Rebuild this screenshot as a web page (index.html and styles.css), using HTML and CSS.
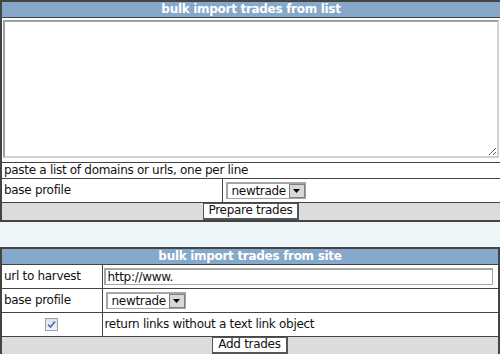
FILE: index.html
```html
<!DOCTYPE html>
<html lang="en">
<head>
    <meta charset="UTF-8">
    <title>Bulk import trades</title>
    <link rel="stylesheet" href="styles.css">
</head>
<body>
    <table class="panel">
        <tr><th colspan="2">bulk import trades from list</th></tr>
        <tr><td colspan="2" class="area-cell"><textarea class="list"></textarea></td></tr>
        <tr><td colspan="2" class="note">paste a list of domains or urls, one per line</td></tr>
        <tr>
            <td class="label wide">base profile</td>
            <td class="field">
                <span class="select">
                    <select><option>newtrade</option></select>
                    <span class="arrow"><svg width="7" height="4" viewBox="0 0 7 4"><path d="M0 0h7L3.5 4z" fill="#000"/></svg></span>
                </span>
            </td>
        </tr>
        <tr><td colspan="2" class="actions"><button>Prepare trades</button></td></tr>
    </table>

    <table class="panel second">
        <tr><th colspan="2">bulk import trades from site</th></tr>
        <tr>
            <td class="label narrow">url to harvest</td>
            <td class="field"><input type="text" class="url" value="http://www."></td>
        </tr>
        <tr>
            <td class="label">base profile</td>
            <td class="field">
                <span class="select">
                    <select><option>newtrade</option></select>
                    <span class="arrow"><svg width="7" height="4" viewBox="0 0 7 4"><path d="M0 0h7L3.5 4z" fill="#000"/></svg></span>
                </span>
            </td>
        </tr>
        <tr>
            <td class="check-cell">
                <span class="checkbox"><svg width="9" height="9" viewBox="0 0 9 9"><path d="M1 4.5l2.5 2.5L8 1.5" fill="none" stroke="#4a62b5" stroke-width="1.6"/></svg></span>
            </td>
            <td class="note tall">return links without a text link object</td>
        </tr>
        <tr><td colspan="2" class="actions"><button>Add trades</button></td></tr>
    </table>
</body>
</html>
```

FILE: styles.css
```css
* {
    box-sizing: border-box;
}

body {
    margin: 0;
    background-color: #eef5f8;
    font-family: 'DejaVu Sans', Verdana, sans-serif;
    font-size: 12px;
    letter-spacing: -0.3px;
    color: #111;
}

/* Panels */
.panel {
    width: 500px;
    border-collapse: collapse;
    background-color: #fff;
    border: 2px solid #444;
}

.panel.second {
    margin-top: 25px;
}

.panel th {
    background-color: #86a8cb;
    color: #fff;
    font-weight: bold;
    font-size: 12px;
    height: 16px;
    padding: 0;
    border: 1px solid #444;
    line-height: 14px;
}

.panel td {
    border: 1px solid #444;
    padding: 0 2px;
    line-height: 14px;
}

.area-cell {
    padding: 2px 1px 4px !important;
}

.list {
    display: block;
    width: 496px;
    height: 138px;
    border: 2px solid #a0a0a0;
    border-right-color: #d0d0d0;
    border-bottom-color: #d0d0d0;
    resize: both;
}

.note {
    height: 16px;
}

.note.tall,
.label,
.check-cell {
    height: 24px;
}

.label.wide {
    width: 221px;
}

.label.narrow {
    width: 101px;
}

.field {
    padding: 0 1px !important;
}

/* Select box */
.select {
    position: relative;
    display: inline-block;
    vertical-align: middle;
    margin-left: 2px;
}

.select select {
    appearance: none;
    -webkit-appearance: none;
    font-family: inherit;
    font-size: 12px;
    letter-spacing: -0.3px;
    color: #111;
    width: 80px;
    height: 17px;
    padding: 0 0 0 4px;
    border: 1px solid #a5a5a5;
    border-width: 2px 1px 1px 2px;
    background-color: #fff;
    border-radius: 0;
}

.select .arrow {
    position: absolute;
    right: 1px;
    top: 2px;
    width: 16px;
    height: 14px;
    background-color: #d8d8d8;
    border: 1px solid #808080;
    display: flex;
    align-items: center;
    justify-content: center;
    pointer-events: none;
}

.url {
    width: 389px;
    height: 17px;
    font-family: inherit;
    font-size: 12px;
    letter-spacing: -0.3px;
    color: #111;
    padding: 0 2px;
    border: 1px solid #a5a5a5;
    border-width: 2px 1px 1px 2px;
    vertical-align: middle;
}

.check-cell {
    text-align: center;
}

.checkbox {
    display: inline-flex;
    align-items: center;
    justify-content: center;
    width: 13px;
    height: 13px;
    border: 1px solid #9aa3ad;
    background: linear-gradient(#dfe3e8, #f4f6f8);
    vertical-align: middle;
}

/* Button row */
.actions {
    background-color: #dcdcdc;
    text-align: center;
    height: 19px;
    padding: 0 !important;
}

.actions button {
    font-family: inherit;
    font-size: 12px;
    letter-spacing: -0.3px;
    color: #111;
    background-color: #fff;
    border: 1px solid #555;
    border-width: 1px 2px 2px 1px;
    padding: 0 5px;
    height: 17px;
    line-height: 13px;
    vertical-align: middle;
}
```
